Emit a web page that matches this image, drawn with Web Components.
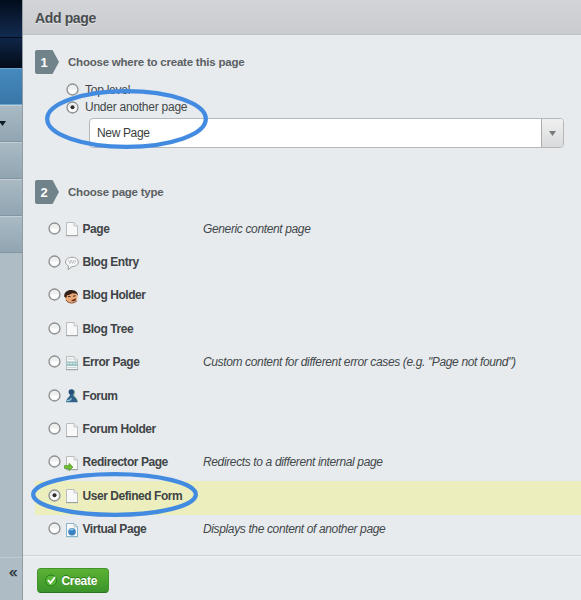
<!DOCTYPE html>
<html lang="en"><head><meta charset="utf-8"><title>Add page</title>
<style>html,body{margin:0;height:600px;overflow:hidden}body{font:12px/16px "Liberation Sans",Arial,sans-serif;color:#43484a}</style></head>
<body><add-page-screen></add-page-screen>
<script>
class Base extends HTMLElement{
  constructor(){super();this.attachShadow({mode:'open'});}
  connectedCallback(){this.shadowRoot.innerHTML=this.render();}
}
const define=(name,render)=>customElements.define(name,class extends Base{render(){return render(this);}});

const sheet=`<path d="M2.500 1.500h7.500l3.500 3.500v9.500h-11z" fill="#f8f8f8" stroke="#bbbdbe"/><path d="M10 1.500v3.500h3.500" fill="#e6e7e7" stroke="#c5c7c8"/><path d="M2 14.700h12" stroke="#999ea0"/>`;
const icons={
  page:sheet,
  entry:`<path d="M8 2.300c3.800 0 6.300 1.700 6.300 4.600 0 3-2.600 4.700-6.300 4.700L4 14.600l.5-3.700C2.600 10.100 1.600 8.800 1.600 6.900c0-2.900 2.700-4.600 6.400-4.600z" fill="#f6f7f7" stroke="#9a9d9e"/><path d="M4.500 5l1.300 3.500L7.300 5l1.300 3.500L10 5m.5 3.500L12 5" fill="none" stroke="#b4b7b8" stroke-width=".8"/>`,
  holder:`<circle cx="7.200" cy="8.700" r="6.300" fill="#e9aa78"/><path d="M.3 9C-.3 4.500 3 1.700 7.500 1.900c4.500.1 6.800 3 6.500 5.900l-1.500-2-4-.5-3 1.500-2.500.5-.5 2.500z" fill="#372018"/><path d="M4 8.300l2.500.4M9 8.300l2.500-.6" stroke="#3d2118"/><path d="M7 12c2 .1 3.500-.8 4.500-2l.3 2.300c-1.400 1.200-3.300 1.200-4.800-.3z" fill="#63251b"/><path d="M2 12c2 3.800 8.500 4 11.200.5" stroke="#875336" fill="none"/>`,
  error:sheet+`<path d="M2 6.500h12V11H2z" fill="#a0c3c4"/><path d="M3 8.500h10" stroke="#dcebe9" stroke-dasharray="2 1"/><path d="M3.500 4h5M3.500 12.500h9" stroke="#c1d6d8"/>`,
  forum:`<path d="M8 1.500c3.500 0 4 3 2.300 5.500.3 2 3.500 3 3.700 7H7.500z" fill="#8db69a"/><circle cx="7.300" cy="4" r="2.700" fill="#244e79"/><path d="M6 6h3c-.2 3 4 3.500 4.500 8.300H2C2 10 6 9.500 6 6z" fill="#315f8b"/><path d="M2.500 12.800c2-1 3.500.7 5-2.600" stroke="#91c9ce" stroke-width="1.500" fill="none"/>`,
  redirect:sheet+`<path d="M.5 10.500h4.500V8.300l4 3.700L5 15.700v-2.200H.5z" fill="#6fbe32" stroke="#559a2a" stroke-width=".7"/>`,
  virtual:sheet+`<path d="M2.500 1.500h7.500l3.500 3.500v9.500h-11z" fill="none" stroke="#86b5cf"/><circle cx="8" cy="9.700" r="3.800" fill="#3b83c0"/><path d="M5 8.400c1-2 4-2.500 5-.8-1 1.400-3 0-5 .8z" fill="#9bcceb"/>`
};
define('page-icon',e=>`<style>:host{display:block;width:16px;height:16px}svg{display:block}</style><svg width="16" height="16" viewBox="0 0 16 16">${icons[e.getAttribute('kind')]}</svg>`);
define('radio-dot',e=>`<style>:host{display:block;width:13px;height:13px}svg{display:block}</style><svg width="13" height="13"><circle cx="6.500" cy="6.500" r="5.500" fill="#eeefef" stroke="#8c8f90" stroke-width="1.300"/><path d="M2.500 6.500a4 4 0 0 0 8 0z" fill="#fff"/>${e.hasAttribute('on')?'<circle cx="6.500" cy="6.300" r="2" fill="#302c2b"/>':''}</svg>`);
define('step-title',e=>`<style>:host{display:flex;height:24px;align-items:center;gap:9px;font-weight:bold;font-size:11.500px;color:#5b6063;letter-spacing:-.22px}svg{display:block}text{font:bold 13px "Liberation Sans",Arial,sans-serif;letter-spacing:0}</style><svg width="24" height="24"><path d="M2 0h15.500L24 12l-6.500 12H2q-2 0-2-2V2q0-2 2-2z" fill="#70838a"/><text x="9" y="16.500" text-anchor="middle" fill="#fff">${e.getAttribute('n')}</text></svg><span><slot></slot></span>`);
define('type-row',e=>`<style>:host{display:grid;grid-template-columns:13px 16px 118.500px 1fr;column-gap:2.500px;align-items:center;height:33.400px;padding:0 0 4px 13px;box-sizing:border-box;background:var(--row,transparent)}
radio-dot{margin-top:-1px}page-icon{margin-top:1px}b{padding-left:.5px;letter-spacing:-.45px;color:#404446;white-space:nowrap}i{letter-spacing:-.365px;white-space:nowrap}</style><radio-dot ${e.hasAttribute('on')?'on':''}></radio-dot><page-icon kind="${e.getAttribute('kind')}"></page-icon><b>${e.getAttribute('name')}</b><i><slot></slot></i>`);
define('page-select',()=>`<style>:host{display:flex;height:30px;width:475px;box-sizing:border-box;border:1px solid #b4b8ba;border-radius:4px;background:#fff;overflow:hidden;letter-spacing:-.35px}span{flex:1;padding:6px 7px;color:#3a3e40}div{width:21px;border-left:1px solid #a9adaf;background:linear-gradient(#f0f0f0,#d8dadb);display:grid;place-items:center}</style><span><slot></slot></span><div><svg width="7" height="5"><path d="M0 0h7L3.500 5z" fill="#777b7d"/></svg></div>`);
define('side-rail',()=>`<style>:host{display:flex;flex-direction:column;width:22px;height:600px;background:#adbcc5;border-right:1px solid #919ca3;box-sizing:content-box}
div{box-sizing:border-box;height:37px;flex:none;background:linear-gradient(#a9bac4,#91a5b2);border-top:1px solid #c2ced5;border-bottom:1px solid #8295a1}
.a{height:38px;border:0;border-bottom:1px solid #020a18;background:linear-gradient(#020d1c,#132b50)}.b{height:30px;border:0;background:linear-gradient(#102648,#020b18)}.c{height:37px;background:linear-gradient(#4689bd,#3977a8);border-color:#6ba4cf #2c6694}
.d{display:flex;align-items:center}.s{flex:1}p{margin:0;height:43px;box-sizing:border-box;border-top:1px solid #bdcad1;padding:5px 0 0 9px;font:15px/18px "Liberation Sans",Arial,sans-serif;color:#20282c;-webkit-text-stroke:.3px}svg{display:block}</style><div class="a"></div><div class="b"></div><div class="c"></div><div class="d"><svg width="7" height="5"><path d="M-1 0h7L2.500 5z" fill="#111d25"/></svg></div><div></div><div></div><div></div><section class="s"></section><p>«</p>`);
define('create-button',()=>`<style>:host{display:flex;box-sizing:border-box;width:72px;height:25px;padding-left:7px;gap:4.500px;align-items:center;background:linear-gradient(#5cb234,#3b942b);border:1px solid #42932c;border-bottom-color:#2a7221;border-radius:4px;color:#fff;font-weight:bold;letter-spacing:-.3px;text-shadow:0 -1px #2d7b20}</style><svg width="12" height="13"><circle cx="6" cy="6.500" r="5.500" fill="#58b936" stroke="#277f23"/><path d="M3 6l2.500 3 4.500-6" fill="none" stroke="#fff" stroke-width="1.800"/></svg><span><slot></slot></span>`);
define('marker-ring',e=>{const w=+e.getAttribute('w'),h=+e.getAttribute('h');return `<style>:host{position:absolute;display:block;pointer-events:none}svg{display:block}</style><svg width="${w}" height="${h}"><ellipse cx="${w/2}" cy="${h/2}" rx="${w/2-2.200}" ry="${h/2-2.200}" fill="none" stroke="#438be0" stroke-width="4.300"/></svg>`;});
define('add-page-screen',()=>`<style>:host{display:flex;position:relative;width:581px;height:600px;background:#e7ebee}
main{flex:1;min-width:0;display:flex;flex-direction:column}header{height:35px;box-sizing:border-box;padding:10px 0 0 12px;background:linear-gradient(#d3d4d7,#cacccf);border-bottom:1px solid #bec2c5;font-weight:bold;font-size:14px;letter-spacing:-.36px;color:#484c4e;text-shadow:0 1px #e5e6e8}
.body{height:520px;box-sizing:border-box;padding:15px 0 0 12px}.opts{padding:7px 0 0 31px;height:37px;box-sizing:border-box;margin-bottom:7px}.o{display:flex;align-items:center;height:17.500px;gap:6px;letter-spacing:-.25px}
page-select{margin-left:54px}.second{margin-top:32px}.types{margin-top:10px}footer{flex:1;border-top:1px solid #cdd1d4;box-shadow:inset 0 1px #f1f4f5;padding:12px 0 0 14px}</style>
<side-rail></side-rail><main><header>Add page</header><div class="body"><step-title n="1">Choose where to create this page</step-title>
<div class="opts"><div class="o"><radio-dot></radio-dot><span>Top level</span></div><div class="o"><radio-dot on></radio-dot><span>Under another page</span></div></div><page-select>New Page</page-select>
<step-title class="second" n="2">Choose page type</step-title><div class="types">
<type-row kind="page" name="Page">Generic content page</type-row><type-row kind="entry" name="Blog Entry"></type-row><type-row kind="holder" name="Blog Holder"></type-row><type-row kind="page" name="Blog Tree"></type-row><type-row kind="error" name="Error Page">Custom content for different error cases (e.g. "Page not found")</type-row><type-row kind="forum" name="Forum"></type-row><type-row kind="page" name="Forum Holder"></type-row><type-row kind="redirect" name="Redirector Page">Redirects to a different internal page</type-row><type-row kind="page" name="User Defined Form" on style="--row:#ecefbd"></type-row><type-row kind="virtual" name="Virtual Page">Displays the content of another page</type-row></div></div>
<footer><create-button>Create</create-button></footer></main><marker-ring w="163" h="60" style="left:45px;top:89px"></marker-ring><marker-ring w="167" h="45" style="left:31px;top:472px"></marker-ring>`);
</script></body></html>
